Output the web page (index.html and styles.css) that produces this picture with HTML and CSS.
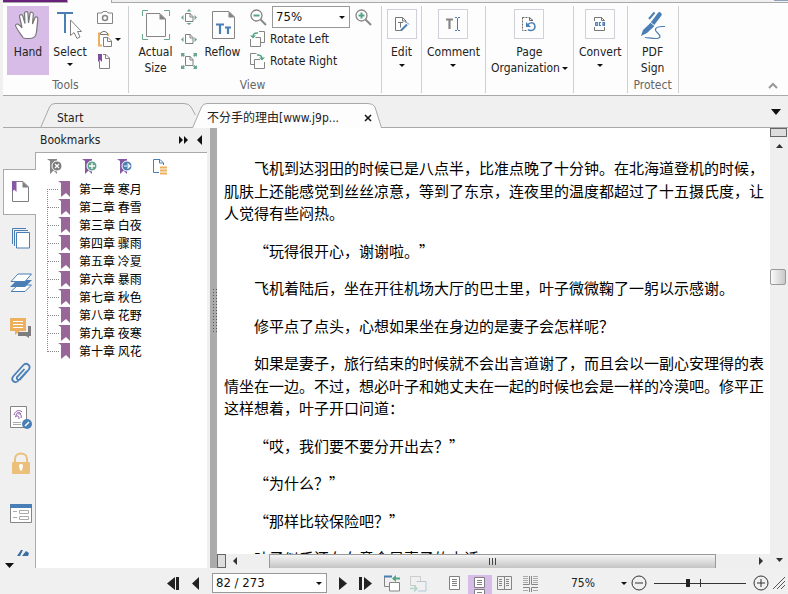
FILE: index.html
```html
<!DOCTYPE html>
<html lang="zh-CN">
<head>
    <meta charset="UTF-8">
    <meta name="viewport" content="width=device-width, initial-scale=1">
    <title>PDF Reader</title>
    <link rel="stylesheet" href="styles.css">
</head>
<body>
    <!-- Ribbon tab strip -->
    <div class="strip">
        <div class="strip-file"></div>
        <div class="strip-active"></div>
        <div class="strip-rest"></div>
        <div class="strip-search"></div>
    </div>

    <!-- Ribbon -->
    <header class="ribbon">
        <section class="group">
            <div class="group-body">
                <button class="big active">
                    <svg width="28" height="30" viewBox="0 0 28 30"><path d="M9 27.500C6 23 2 18 1.500 15.500C2 13 5 13.500 8 18L5.500 6.500C5.500 4 8.500 4 9 6.500L11 13.500L10.500 3.500C10.500 1 14 1 14 3.500L14.500 13L16 3.500C16.500 1.500 19.500 1.800 19.300 4.500L18.500 14L20.800 8C22 6 24.200 7 23.800 9.500L22.500 22C22 26 20 28.500 16 28.500H12C10.500 28.500 9.500 28.200 9 27.500Z" fill="#fff" stroke="#777" stroke-width="1.200"/></svg>
                    <span>Hand</span>
                </button>
                <button class="big">
                    <svg width="28" height="30" viewBox="0 0 28 30"><path d="M1 3H17M9 3V23" stroke="#4a7fb5" stroke-width="2" fill="none"/><path d="M14.500 10V25.500L18 22.500L21 28.500L24 27L21.500 21.500H25.500Z" fill="#fff" stroke="#808080"/></svg>
                    <span>Select</span>
                    <i class="arrow"></i>
                </button>
                <div class="minis">
                    <button class="mini" aria-label="Snapshot"><svg width="16" height="16" viewBox="0 0 16 16" fill="none" stroke="#858585"><path d="M.5 4V14.500H15.500V4H11L10 2.500H6L5 4Z"/><circle cx="8" cy="9" r="2.500" stroke-width="1.500"/></svg></button>
                    <button class="mini" aria-label="Clipboard"><svg width="16" height="16" viewBox="0 0 16 16" fill="none"><path d="M5 14.500H2V2.500H4M11 2.500V5" stroke="#edb05e" stroke-width="2"/><path d="M3.500 3.500V2L6 .5H8L10.500 2V3.500Z" stroke="#777"/><path d="M6.500 6.500H11L14.500 10V15.500H6.500Z" fill="#fff" stroke="#808080"/><path d="M10.500 6.500V10.500H14.500" stroke="#808080"/></svg><i class="arrow"></i></button>
                    <button class="mini" aria-label="Bookmark"><svg width="16" height="16" viewBox="0 0 16 16" fill="none"><path d="M2.500 8V15.500H12.500V5L9 1.500H6M8.500 1.500V5.500H12.500" stroke="#808080"/><path d="M1 1H5V9L3 7L1 9Z" fill="#7d4f9b"/></svg></button>
                </div>
            </div>
            <h2>Tools</h2>
        </section>

        <section class="group group-view">
            <div class="group-body">
                <button class="big">
                    <svg width="28" height="30" viewBox="0 0 28 30" fill="none"><path d="M.5 6V.5H6M22 .5H27.500V6M27.500 24V29.500H22M6 29.500H.5V24" stroke="#6aa58f"/><path d="M4.500 3.500H18L23.500 9V26.500H4.500Z" stroke="#858585" fill="#fdfdfd"/><path d="M17.500 3.500L24 9.500H17.500Z" fill="#858585"/></svg>
                    <span>Actual<br>Size</span>
                </button>
                <div class="minis">
                    <button class="mini" aria-label="Fit page"><svg width="16" height="16" viewBox="0 0 16 16"><path d="M4.500 4.500H9L12 7.500V12.500H4.500Z" fill="none" stroke="#808080"/><path d="M9 4V8H12" fill="none" stroke="#808080"/><path d="M8 0L10.500 2.500H5.500ZM8 16L10.500 14H5.500ZM0 8.500L2.500 6V11ZM16 8.500L13.500 6V11Z" fill="#6aa58f"/></svg></button>
                    <button class="mini" aria-label="Fit width"><svg width="16" height="16" viewBox="0 0 16 16"><path d="M4.500 3.500H9L12 6.500V12.500H4.500Z" fill="none" stroke="#808080"/><path d="M9 3V7H12" fill="none" stroke="#808080"/><path d="M0 8.500L2.500 6V11ZM16 8.500L13.500 6V11Z" fill="#6aa58f"/></svg></button>
                    <button class="mini" aria-label="Fit visible"><svg width="16" height="16" viewBox="0 0 16 16"><path d="M4.500 3.500H9L12 6.500V12.500H4.500Z" fill="none" stroke="#808080"/><path d="M9 3V7H12" fill="none" stroke="#808080"/><path d="M0 4V0H4L2.800 1.200L4 2.400L2.400 4L1.200 2.800ZM16 4V0H12L13.200 1.200L12 2.400L13.600 4L14.800 2.800ZM0 12V16H4L2.800 14.800L4 13.600L2.400 12L1.200 13.200ZM16 12V16H12L13.200 14.800L12 13.600L13.600 12L14.800 13.200Z" fill="#6aa58f"/></svg></button>
                </div>
                <button class="big">
                    <svg width="28" height="30" viewBox="0 0 28 30" fill="none"><path d="M3.500 1.500H20L25.500 7V28.500H3.500Z" stroke="#858585"/><path d="M19.500 1.500L26 7.500H19.500Z" fill="#858585"/><path d="M7 14.500H15M11 14V24M16 17.500H22M19 17V24" stroke="#4a7fb5" stroke-width="2.200"/></svg>
                    <span>Reflow</span>
                </button>
                <div class="zoom-tools">
                    <div class="zoom-row">
                        <button class="mini" aria-label="Zoom out"><svg width="17" height="17" viewBox="0 0 17 17" fill="none"><circle cx="6.500" cy="6.500" r="5.500" stroke="#858585" stroke-width="1.300"/><path d="M10.500 10.500L16 16" stroke="#8a8a8a" stroke-width="2"/><path d="M3.500 6.500H9.500" stroke="#56a486" stroke-width="2"/></svg></button>
                        <label class="combo zoom-combo">
                            <select aria-label="Zoom"><option>75%</option><option>100%</option></select>
                            <i class="arrow"></i>
                        </label>
                        <button class="mini" aria-label="Zoom in"><svg width="17" height="17" viewBox="0 0 17 17" fill="none"><circle cx="6.500" cy="6.500" r="5.500" stroke="#858585" stroke-width="1.300"/><path d="M10.500 10.500L16 16" stroke="#8a8a8a" stroke-width="2"/><path d="M3.500 6.500H9.500M6.500 3.500V9.500" stroke="#56a486" stroke-width="2"/></svg></button>
                    </div>
                    <button class="rotate"><svg width="16" height="16" viewBox="0 0 16 16" fill="none"><path d="M9 .5H14.500V11.500H11M.5 8V15.500H10.500V6.500H5.500" stroke="#858585"/><path d="M8 2C5 1.500 3 3 3 6" stroke="#56a486" stroke-width="1.500"/><path d="M0 4.500H6L3 7.500Z" fill="#56a486"/></svg>Rotate Left</button>
                    <button class="rotate"><svg width="16" height="16" viewBox="0 0 16 16" fill="none"><path d="M6.500 .5H.5V11.500H4M10 6.500H4.500V15.500H14.500V9" stroke="#858585"/><path d="M7 2C10 1.500 12 3 12 6" stroke="#56a486" stroke-width="1.500"/><path d="M9 4.500H15L12 7.500Z" fill="#56a486"/></svg>Rotate Right</button>
                </div>
            </div>
            <h2>View</h2>
        </section>

        <section class="group">
            <button class="framed">
                <span class="frame"><svg width="16" height="16" viewBox="0 0 16 16" fill="none"><path d="M9 12.500L7 14.500H1.500V1.500H8.500L12 5V7" stroke="#777"/><path d="M8.500 1.500V5H12M4 6.500H9M6.500 6.500V11.500" stroke="#777"/><path d="M7 14.500L13 8.500" stroke="#4a7fb5" stroke-width="2"/><path d="M13 6.500L15 8.500" stroke="#4a7fb5"/></svg></span>
                <span>Edit</span>
                <i class="arrow"></i>
            </button>
        </section>
        <section class="group">
            <button class="framed">
                <span class="frame"><svg width="16" height="16" viewBox="0 0 16 16" fill="none"><path d="M1 3.500H8M4.500 3.500V13" stroke="#858585" stroke-width="2.200"/><path d="M10 1.500H12M13 1.500H15M10 14.500H12M13 14.500H15M12.500 2V14" stroke="#4a7fb5"/></svg></span>
                <span>Comment</span>
                <i class="arrow"></i>
            </button>
        </section>
        <section class="group">
            <button class="framed">
                <span class="frame"><svg width="16" height="16" viewBox="0 0 16 16" fill="none"><path d="M1.500 1.500V14.500H6M1.500 1.500H8" stroke="#666" stroke-dasharray="2 1"/><path d="M8.500 1.500V4.500H12Z" stroke="#666"/><path d="M7 9C8 6.500 12 6 13.500 8.500C15 11.500 13 14.500 10 14.500C8.500 14.500 7.500 14 7 13.500" stroke="#4a7fb5" stroke-width="1.500"/><path d="M5 6V11H10Z" fill="#4a7fb5"/></svg></span>
                <span>Page<br>Organization<i class="arrow inline"></i></span>
            </button>
        </section>
        <section class="group">
            <button class="framed">
                <span class="frame"><svg width="16" height="16" viewBox="0 0 16 16" fill="none"><path d="M2.500 5V1.500H9.500L12.500 4.500V5M2.500 11V14.500H12.500V11M9.500 1.500V4.500H12.500" stroke="#777"/><path d="M3.700 6.500H5.300V9.500H3.700ZM9 6.500H7.500V9.500H9M11 10V6.500H12.500V8.300H11.500L12.800 10" stroke="#4a7fb5" stroke-width="1.200"/></svg></span>
                <span>Convert</span>
                <i class="arrow"></i>
            </button>
        </section>
        <section class="group group-protect">
            <div class="group-body">
                <button class="big">
                    <svg width="28" height="30" viewBox="0 0 28 30" fill="none"><path d="M20.500 4.500L12.500 15" stroke="#4a7fb5" stroke-width="4.500" stroke-linecap="round"/><path d="M11.500 13L15.500 16L8 23L2 26L4 20Z" fill="#4a7fb5"/><path d="M10 9L15.500 2.500" stroke="#4a7fb5" stroke-width="2"/><path d="M11 12L17 17" stroke="#fdfdfd"/><path d="M6 27.500C12 28 21 30 21 26.500C21 23.500 15.500 22 16.500 19C17.500 16 22 16.500 26 16.500" stroke="#4a7fb5" stroke-width="1.200"/></svg>
                    <span>PDF<br>Sign</span>
                </button>
            </div>
            <h2>Protect</h2>
        </section>
        <button class="collapse" aria-label="Collapse ribbon"><svg width="10" height="7" viewBox="0 0 10 7"><path d="M1 6L5 2L9 6" fill="none" stroke="#999" stroke-width="2"/></svg></button>
    </header>

    <!-- Document tabs -->
    <nav class="tabs">
        <a class="tab" href="#start">
            <svg class="tab-shape" viewBox="0 0 156 25" preserveAspectRatio="none"><path d="M.5 25L9.500 4Q11 .5 15 .5H144Q149 .5 151 4L155.500 12"/></svg>
            <span>Start</span>
        </a>
        <div class="tab tab-current">
            <svg class="tab-shape" viewBox="0 0 190 25" preserveAspectRatio="none"><path d="M.5 25L9.500 4Q11 .5 15 .5H176Q181 .5 183 4L189.500 25"/></svg>
            <a href="#doc">不分手的理由[www.j9p...</a>
            <button aria-label="Close tab"><svg width="8" height="8" viewBox="0 0 8 8"><path d="M1 1L7 7M7 1L1 7" stroke="#111" stroke-width="1.500"/></svg></button>
        </div>
        <button class="tab-list" aria-label="Tab list"><svg width="10" height="6" viewBox="0 0 10 6"><path d="M0 0H10L5 6Z" fill="#111"/></svg></button>
    </nav>

    <main class="work">
        <aside class="rail">
            <button class="current" aria-label="Bookmarks"><svg width="18" height="22" viewBox="0 0 18 22" fill="none"><path d="M5 .5H12L17.500 6V20.500H1.500V10" stroke="#808080"/><path d="M11.500 .5L18 6.500H11.500Z" fill="#808080"/><path d="M1 0H5.500V11L3.200 8.500L1 11Z" fill="#8657a5"/></svg></button>
            <button aria-label="Pages"><svg width="20" height="22" viewBox="0 0 20 22" fill="none" stroke="#4a7fb5"><path d="M1.500 17V1.500H15M3.500 19V3.500H17"/><path d="M5.500 5.500H18.500V21H5.500Z" fill="#fff"/></svg></button>
            <button aria-label="Layers"><svg width="22" height="20" viewBox="0 0 22 20"><path d="M1 18.500L8 12H21.500L15 18.500Z" fill="#fff" stroke="#4a7fb5"/><path d="M0 14L7 7H22L15 14Z" fill="#4a7fb5"/><path d="M1 8.500L8 1H21.500L15 8.500Z" fill="#fff" stroke="#4a7fb5"/></svg></button>
            <button aria-label="Comments"><svg width="22" height="22" viewBox="0 0 22 22"><path d="M18 9H21V19H19V21L16 19H8V15H18Z" fill="#7d7d7d"/><path d="M0 1H16V14H10L5 18V14H0Z" fill="#edb05e"/><path d="M3 4.500H13M3 7.500H13M3 10.500H13" stroke="#fff"/></svg></button>
            <button aria-label="Attachments"><svg width="20" height="22" viewBox="0 0 20 22" fill="none" stroke="#4a7fb5" stroke-width="1.800"><path d="M16 9L7.500 18.500C4 22.500-1 18 2.500 14L12 3.500C15.500-.5 21 4 17.500 8L9.500 17C7 19.500 4.500 16.500 6.500 14.500L13.500 7"/></svg></button>
            <button aria-label="Signatures"><svg width="22" height="24" viewBox="0 0 22 24" fill="none"><path d="M.5 .5H16.500V21.500H.5Z" fill="#fff" stroke="#858585"/><path d="M4 9C5 5 9 3 12 6M6 10C6 7 9 5 11 8M8 8C10 7 12 9 11 12M5 11C8 9 9 10 9 13" stroke="#8657a5"/><path d="M3 16.500H11M3 18.500H11" stroke="#aaa"/><circle cx="17" cy="18" r="5" fill="#4a7fb5"/><path d="M15 20L19 16" stroke="#fff" stroke-width="1.500"/></svg></button>
            <button aria-label="Security"><svg width="18" height="22" viewBox="0 0 18 22"><path d="M3 11V7C3-.5 15-.5 15 7V11" fill="none" stroke="#eac07b" stroke-width="2"/><rect y="10" width="18" height="12" rx="1" fill="#eac07b"/><path d="M7 14A2 2 0 1 1 11 14L10 18.500H8Z" fill="#fff"/></svg></button>
            <button class="fields" aria-label="Fields"><svg width="22" height="19" viewBox="0 0 22 19" fill="none"><path d="M.5 .5H21.500V18.500H.5Z" fill="#fff" stroke="#858585"/><path d="M0 0H22V4H0Z" fill="#4a7fb5"/><path d="M3 7.500H7M3 13.500H7M9.500 6.500H18.500V9.500H9.500ZM9.500 12.500H18.500V15.500H9.500Z" stroke="#aaa"/></svg></button>
            <div class="rail-more">
                <svg class="rail-cut" width="12" height="6" viewBox="0 0 12 6"><path d="M0 6L4 0H6L3 6ZM5 6L9 1L12 3L11 6Z" fill="#3a6ea5"/></svg>
                <button aria-label="More panels"><svg width="9" height="5" viewBox="0 0 9 5"><path d="M0 0H9L4.500 5Z" fill="#111"/></svg></button>
            </div>
        </aside>

        <section class="panel">
            <div class="panel-head">
                <h2>Bookmarks</h2>
                <button aria-label="Expand"><svg width="9" height="8" viewBox="0 0 9 8"><path d="M0 0L4 4L0 8ZM5 0L9 4L5 8Z" fill="#111"/></svg></button>
                <button aria-label="Hide panel"><svg width="5" height="10" viewBox="0 0 5 10"><path d="M5 0V10L0 5Z" fill="#111"/></svg></button>
            </div>
            <div class="panel-body">
                <div class="panel-tools">
                    <button aria-label="Delete bookmark"><svg width="16" height="17" viewBox="0 0 16 17"><path d="M0 1H10V16L6.500 12.500L3 16V3Z" fill="#858585"/><circle cx="10" cy="8" r="5" fill="#7a7a7a" stroke="#fff"/><path d="M8 6L12 10M12 6L8 10" stroke="#fff" stroke-width="1.300"/></svg></button>
                    <button aria-label="Add bookmark"><svg width="16" height="17" viewBox="0 0 16 17"><path d="M0 1H10V16L6.500 12.500L3 16V3Z" fill="#8657a5"/><circle cx="10" cy="8" r="5" fill="#63a58c" stroke="#fff"/><path d="M7 8H13M10 5V11" stroke="#fff" stroke-width="1.300"/></svg></button>
                    <button aria-label="Go to bookmark"><svg width="16" height="17" viewBox="0 0 16 17"><path d="M0 1H10V16L6.500 12.500L3 16V3Z" fill="#8657a5"/><circle cx="10" cy="8" r="5" fill="#4a7fb5" stroke="#fff"/><path d="M7 8H13M10.500 5.500L13 8L10.500 10.500" stroke="#fff" fill="none" stroke-width="1.200"/></svg></button>
                    <button aria-label="Options"><svg width="16" height="17" viewBox="0 0 16 17" fill="none"><path d="M7 14.500H1.500V1.500H8L11.500 5V7M7.500 1.500V5H11" stroke="#4a7fb5"/><path d="M8 9.500H15M8 12.500H15M8 15.500H15" stroke="#edb05e" stroke-width="2"/></svg></button>
                </div>
                <ul class="tree">
                    <li><svg class="mark" viewBox="0 0 12 16"><path d="M0 0H12V16L8 12L3 16V2Z"/></svg><a href="#c1">第一章 寒月</a></li>
                    <li><svg class="mark" viewBox="0 0 12 16"><path d="M0 0H12V16L8 12L3 16V2Z"/></svg><a href="#c2">第二章 春雪</a></li>
                    <li><svg class="mark" viewBox="0 0 12 16"><path d="M0 0H12V16L8 12L3 16V2Z"/></svg><a href="#c3">第三章 白夜</a></li>
                    <li><svg class="mark" viewBox="0 0 12 16"><path d="M0 0H12V16L8 12L3 16V2Z"/></svg><a href="#c4">第四章 骤雨</a></li>
                    <li><svg class="mark" viewBox="0 0 12 16"><path d="M0 0H12V16L8 12L3 16V2Z"/></svg><a href="#c5">第五章 冷夏</a></li>
                    <li><svg class="mark" viewBox="0 0 12 16"><path d="M0 0H12V16L8 12L3 16V2Z"/></svg><a href="#c6">第六章 暴雨</a></li>
                    <li><svg class="mark" viewBox="0 0 12 16"><path d="M0 0H12V16L8 12L3 16V2Z"/></svg><a href="#c7">第七章 秋色</a></li>
                    <li><svg class="mark" viewBox="0 0 12 16"><path d="M0 0H12V16L8 12L3 16V2Z"/></svg><a href="#c8">第八章 花野</a></li>
                    <li><svg class="mark" viewBox="0 0 12 16"><path d="M0 0H12V16L8 12L3 16V2Z"/></svg><a href="#c9">第九章 夜寒</a></li>
                    <li><svg class="mark" viewBox="0 0 12 16"><path d="M0 0H12V16L8 12L3 16V2Z"/></svg><a href="#c10">第十章 风花</a></li>
                </ul>
            </div>
        </section>

        <div class="splitter"><div class="grip"></div></div>

        <section class="viewer">
            <div class="doc-col">
                <article class="doc" id="doc">
                    <p>飞机到达羽田的时候已是八点半，比准点晚了十分钟。在北海道登机的时候，肌肤上还能感觉到丝丝凉意，等到了东京，连夜里的温度都超过了十五摄氏度，让人觉得有些闷热。</p>
                    <p>“玩得很开心，谢谢啦。”</p>
                    <p>飞机着陆后，坐在开往机场大厅的巴士里，叶子微微鞠了一躬以示感谢。</p>
                    <p>修平点了点头，心想如果坐在身边的是妻子会怎样呢？</p>
                    <p>如果是妻子，旅行结束的时候就不会出言道谢了，而且会以一副心安理得的表情坐在一边。不过，想必叶子和她丈夫在一起的时候也会是一样的冷漠吧。修平正这样想着，叶子开口问道：</p>
                    <p>“哎，我们要不要分开出去？”</p>
                    <p>“为什么？”</p>
                    <p>“那样比较保险吧？”</p>
                    <p>叶子似乎还在在意今早妻子的电话。</p>
                </article>
                <div class="hscroll">
                    <div class="split-box"></div>
                    <button aria-label="Scroll left"><svg width="4" height="8" viewBox="0 0 4 8"><path d="M4 0V8L0 4Z" fill="#333"/></svg></button>
                    <div class="htrack"><div class="hthumb"><i></i><i></i><i></i></div></div>
                    <button aria-label="Scroll right"><svg width="4" height="8" viewBox="0 0 4 8"><path d="M0 0V8L4 4Z" fill="#333"/></svg></button>
                </div>
            </div>
            <div class="vscroll">
                <div class="split-box"></div>
                <button aria-label="Scroll up"><svg width="7" height="4" viewBox="0 0 7 4"><path d="M0 4H7L3.500 0Z" fill="#333"/></svg></button>
                <div class="vtrack"><div class="vthumb"></div></div>
                <button aria-label="Scroll down"><svg width="7" height="4" viewBox="0 0 7 4"><path d="M0 0H7L3.500 4Z" fill="#333"/></svg></button>
            </div>
        </section>
    </main>

    <footer class="status">
        <button aria-label="First page"><svg width="13" height="13" viewBox="0 0 13 13"><path d="M8 0V13L0 6.500ZM9 0H12V13H9Z" fill="#222"/></svg></button>
        <button aria-label="Previous page"><svg width="8" height="13" viewBox="0 0 8 13"><path d="M7 0V13L0 6.500Z" fill="#222"/></svg></button>
        <label class="combo page-combo">
            <select aria-label="Page"><option>82 / 273</option></select>
            <i class="arrow"></i>
        </label>
        <button aria-label="Next page"><svg width="8" height="13" viewBox="0 0 8 13"><path d="M0 0V13L8 6.500Z" fill="#222"/></svg></button>
        <button aria-label="Last page"><svg width="13" height="13" viewBox="0 0 13 13"><path d="M5 0V13L13 6.500ZM0 0H3V13H0Z" fill="#222"/></svg></button>
        <div class="status-set">
            <button aria-label="Previous view"><svg width="17" height="17" viewBox="0 0 17 17" fill="none"><path d="M6 11.500H.5V1.500H8" stroke="#858585"/><path d="M0 1.500H8" stroke="#4a7fb5" stroke-width="2"/><path d="M5.500 7.500H15.500V16H5.500Z" fill="#fff" stroke="#858585"/><path d="M9 3.500H16" stroke="#56a486" stroke-width="2"/><path d="M8 3.500L12 0V7Z" fill="#56a486"/></svg></button>
            <button aria-label="Next view"><svg width="17" height="17" viewBox="0 0 17 17" fill="none"><path d="M6 10.500H.5V1.500H10.500V6" stroke="#ccc"/><path d="M6.500 6.500H16V16H8" stroke="#b4c8d8"/><path d="M0 13.500H7M4 10.500L7 13.500L4 16.500" stroke="#b4d4c8" stroke-width="1.500"/></svg></button>
        </div>
        <div class="modes">
            <button aria-label="Single page"><svg width="12" height="14" viewBox="0 0 12 14" fill="none" stroke="#808080"><path d="M.5 .5H10.500V13.500H.5Z" fill="#fff"/><path d="M3 3.500H8M3 5.500H8M3 7.500H8M3 9.500H8"/></svg></button>
            <button class="on" aria-label="Continuous"><svg width="12" height="18" viewBox="0 0 12 18" fill="none" stroke="#808080"><path d="M.5 1.500H10.500V11.500H.5ZM.5 18V13.500H10.500V18" fill="#fff"/><path d="M3 4.500H8M3 6.500H8M3 8.500H8M3 16.500H8"/></svg></button>
            <button aria-label="Facing"><svg width="16" height="14" viewBox="0 0 16 14" fill="none" stroke="#858585"><path d="M.5 .5H7.500V13.500H.5ZM7.500 .5H14.500V13.500H7.500Z"/><path d="M2 3.500H5M2 5.500H5M2 7.500H5M2 9.500H5M9 3.500H12M9 5.500H12M9 7.500H12M9 9.500H12"/></svg></button>
            <button aria-label="Continuous facing"><svg width="16" height="18" viewBox="0 0 16 18" fill="none" stroke="#858585"><path d="M6.500 2V10.500H0M8.500 2V10.500H15M0 13.500H6.500V18M15 13.500H8.500V18"/><path d="M0 2.500H5M0 4.500H5M0 6.500H5M0 8.500H5M10 2.500H15M10 4.500H15M10 6.500H15M10 8.500H15M0 16.500H5M10 16.500H15" stroke="#aaa"/></svg></button>
        </div>
        <button class="percent">75%<i class="arrow"></i></button>
        <div class="zoom-bar">
            <button aria-label="Zoom out"><svg width="16" height="16" viewBox="0 0 16 16" fill="none" stroke="#333"><circle cx="8" cy="8" r="7"/><path d="M4 8H12"/></svg></button>
            <input type="range" min="0" max="100" value="36" aria-label="Zoom level">
            <button aria-label="Zoom in"><svg width="16" height="16" viewBox="0 0 16 16" fill="none" stroke="#333"><circle cx="8" cy="8" r="7"/><path d="M4 8H12M8 4V12"/></svg></button>
            <svg width="13" height="12" viewBox="0 0 13 12"><path d="M0 12L12 0M4 12L12 4M8 12L12 8" stroke="#555"/></svg>
        </div>
    </footer>
</body>
</html>
```

FILE: styles.css
```css
* {
    box-sizing: border-box;
}

body {
    margin: 0;
    height: 100vh;
    display: flex;
    flex-direction: column;
    overflow: hidden;
    background: #f0f0f0;
    color: #222;
    font-family: "DejaVu Sans Condensed", "Noto Sans CJK SC", sans-serif;
    font-size: 12px;
    line-height: 16px;
}

button {
    display: flex;
    align-items: center;
    justify-content: center;
    padding: 0;
    border: 0;
    background: none;
    color: inherit;
    font: inherit;
}

h2 {
    margin: 0;
    font-size: 12px;
    font-weight: normal;
}

a {
    color: inherit;
    text-decoration: none;
}

svg {
    display: block;
    flex: none;
}

/* small drop-down triangle */
.arrow {
    flex: none;
    border: 3px solid transparent;
    border-top-color: #111;
    border-bottom: 0;
}

.arrow.inline {
    display: inline-block;
    margin-left: 2px;
    vertical-align: middle;
}

/* Ribbon */
.strip {
    display: flex;
    flex: none;
    height: 3px;
    padding-left: 3px;
}

.strip-file {
    width: 64px;
    border-top: 2px solid #68217a;
    border-bottom: 1px solid #a9a9a9;
}

.strip-active {
    width: 45px;
    background: #fdfdfd;
    border: solid #a9a9a9;
    border-width: 0 1px;
}

.strip-rest {
    flex: 1;
    border-bottom: 1px solid #a9a9a9;
}

.strip-search {
    width: 14px;
    border-top: 1px solid #8fa3bb;
    border-bottom: 1px solid #a9a9a9;
}

.ribbon {
    display: flex;
    flex: none;
    margin-left: 3px;
    padding: 3px 10px 2px 0;
    background: #fdfdfd;
    border-bottom: 1px solid #a9a9a9;
}

.group {
    display: flex;
    flex-direction: column;
    justify-content: space-between;
    min-height: 87px;
    padding: 0 4px;
    border-right: 1px solid #d0d0d4;
}

.group h2 {
    color: #666;
    text-align: center;
}

.group-body {
    display: flex;
}

.group-view {
    padding-right: 9px;
}

.big {
    flex-direction: column;
    justify-content: flex-start;
    width: 42px;
    height: 69px;
    padding-top: 4px;
}

.big span {
    margin-top: 4px;
}

.big .arrow {
    margin-top: 3px;
}

.big.active {
    background: #d8bce8;
}

.group-view .big {
    width: 45px;
}

.minis {
    display: flex;
    flex-direction: column;
    padding: 0 3px 0 6px;
}

.group-view .minis {
    padding: 0 3px;
}

.mini {
    height: 22px;
    gap: 2px;
    justify-content: flex-start;
}

.zoom-tools {
    padding-left: 5px;
}

.zoom-row {
    display: flex;
    align-items: center;
    gap: 5px;
}

.rotate {
    height: 22px;
    gap: 4px;
}

/* native select with our own triangle laid over it */
.combo {
    display: grid;
    align-items: center;
    background: #fff;
    border: 1px solid #999;
}

.combo > * {
    grid-area: 1 / 1;
}

.combo select {
    appearance: none;
    width: 100%;
    padding: 0 3px;
    border: 0;
    background: none;
    color: #111;
    font: inherit;
    font-size: 13px;
}

.combo .arrow {
    justify-self: end;
    margin-right: 4px;
    pointer-events: none;
}

.zoom-combo {
    width: 78px;
    height: 22px;
}

.framed {
    flex-direction: column;
    justify-content: flex-start;
    min-width: 31px;
    padding-top: 3px;
}

.framed > span {
    padding: 0 1px;
}

.framed .frame {
    display: grid;
    place-items: center;
    width: 30px;
    height: 30px;
    margin-bottom: 5px;
    border: 1px solid #d0d0d8;
}

.framed > .arrow {
    margin-top: 4px;
}

.collapse {
    align-self: flex-end;
    margin: 0 0 4px auto;
}

/* Document tabs */
.tabs {
    display: flex;
    flex: none;
    align-items: flex-end;
    height: 32px;
    margin-left: 3px;
    padding: 0 7px 0 37px;
    border-bottom: 1px solid #a9a9a9;
}

.tab {
    position: relative;
    display: flex;
    align-items: center;
    width: 156px;
    height: 24px;
    padding-left: 17px;
}

.tab-shape {
    position: absolute;
    inset: 0;
    width: 100%;
    height: 25px;
    fill: none;
    stroke: #a9a9a9;
}

.tab span,
.tab a,
.tab button {
    position: relative;
    padding-top: 5px;
}

.tab-current {
    justify-content: space-between;
    width: 190px;
    margin-left: -4px;
    padding: 0 10px 0 15px;
}

.tab-current .tab-shape {
    fill: #fdfdfd;
}

.tab-list {
    align-self: center;
    margin-left: auto;
}

/* Work area */
.work {
    display: flex;
    flex: 1;
    min-height: 0;
}

.rail {
    display: flex;
    flex-direction: column;
    flex: none;
    width: 35px;
    padding: 41px 0 0 3px;
}

.rail > button {
    flex: none;
    height: 45px;
    padding-left: 3px;
}

.rail .current {
    z-index: 1;
    height: 46px;
    margin-right: -1px;
    padding: 0;
    background: #fff;
    border: 1px solid #a9a9a9;
    border-right: 0;
}

.rail .fields {
    margin-top: 6px;
}

.rail-more {
    display: flex;
    flex-direction: column;
    gap: 7px;
    padding: 14px 0 0 2px;
}

.rail-more button {
    align-self: flex-start;
}

.rail-cut {
    align-self: center;
    margin-left: 6px;
}

.panel {
    display: flex;
    flex-direction: column;
    flex: none;
    width: 172px;
}

.panel-head {
    display: flex;
    align-items: center;
    height: 24px;
    padding: 0 5px;
    gap: 9px;
}

.panel-head h2 {
    flex: 1;
}

.panel-body {
    flex: 1;
    background: #fff;
    border: solid #a9a9a9;
    border-width: 1px 0 0 1px;
}

.panel-tools {
    display: flex;
    gap: 19px;
    padding: 5px 11px;
}

.tree {
    margin: 0;
    padding: 0 0 0 11px;
    list-style: none;
    color: #000;
    font-family: "Noto Sans CJK SC", sans-serif;
}

.tree li {
    position: relative;
    display: flex;
    align-items: center;
    height: 18px;
    padding-left: 11px;
}

.tree li::before {
    content: "";
    position: absolute;
    left: 0;
    top: -9px;
    width: 11px;
    height: 18px;
    border: dotted #888;
    border-width: 0 0 1px 1px;
}

.tree li:first-child::before {
    top: 8px;
    height: 1px;
    border-left: 0;
}

.mark {
    width: 12px;
    height: 16px;
    margin-right: 9px;
    fill: #996699;
}

.splitter {
    display: flex;
    flex: none;
    align-items: center;
    justify-content: flex-end;
    width: 10px;
    background: #ababab;
    border-left: 3px solid #f0f0f0;
}

.grip {
    width: 5px;
    height: 44px;
    margin-bottom: 76px;
    background: radial-gradient(#555 1px, transparent 1px) 0 0 / 3px 3px;
}

/* Viewer */
.viewer {
    display: flex;
    flex: 1;
    min-width: 0;
}

.doc-col {
    display: flex;
    flex-direction: column;
    flex: 1;
    min-width: 0;
    background: #fff;
}

.doc {
    flex: 1;
    min-height: 0;
    padding: 29px 5px 0 7px;
    overflow: hidden;
    color: #000;
    font-family: "Noto Sans CJK SC", sans-serif;
    font-size: 15px;
    line-height: 1.5;
    text-spacing-trim: space-all;
}

.doc p {
    margin: 0 0 15px;
    text-indent: 2em;
}

.hscroll {
    display: flex;
    flex: none;
    height: 14px;
    background: #efefef;
}

.hscroll button {
    width: 18px;
}

.split-box {
    flex: none;
    width: 9px;
    background: #ddd;
    border: 1px solid #666;
}

.htrack {
    flex: 1;
    padding: 0 36px 0 25px;
}

.hthumb {
    display: flex;
    align-items: center;
    justify-content: center;
    gap: 2px;
    height: 14px;
    background: linear-gradient(#f5f5f5, #c4c4c4);
    border: 1px solid #999;
    border-bottom: 0;
}

.hthumb i {
    width: 1px;
    height: 7px;
    background: #444;
}

.vscroll {
    display: flex;
    flex-direction: column;
    flex: none;
    width: 18px;
    background: #efefef;
}

.vscroll .split-box {
    width: 17px;
    height: 9px;
}

.vscroll button {
    height: 17px;
}

.vtrack {
    flex: 1;
    padding-top: 115px;
}

.vthumb {
    width: 16px;
    height: 16px;
    background: linear-gradient(90deg, #fafafa, #c8c8c8);
    border: 1px solid #999;
    border-radius: 2px;
}

/* Status bar */
.status {
    display: flex;
    flex: none;
    align-items: center;
    gap: 12px;
    height: 26px;
    padding: 4px 2px 0 167px;
    overflow: hidden;
}

.status > button {
    flex: none;
}

.page-combo {
    width: 115px;
    height: 20px;
}

.status-set {
    display: flex;
    gap: 9px;
}

.modes {
    display: flex;
    align-self: stretch;
    margin-left: 3px;
}

.modes button {
    width: 26px;
}

.modes .on {
    width: 24px;
    margin-top: 3px;
    background: #d8bce8;
}

.percent {
    gap: 26px;
    margin: 0 -8px 0 auto;
}

.zoom-bar {
    display: flex;
    align-items: center;
    gap: 4px;
}

.zoom-bar input {
    appearance: none;
    width: 92px;
    height: 9px;
    margin: 0 3px;
    background:
        linear-gradient(#333, #333) 50% 50% / 1px 8px no-repeat,
        linear-gradient(#333, #333) 0 50% / 100% 1px no-repeat;
}

.zoom-bar input::-webkit-slider-thumb {
    appearance: none;
    width: 4px;
    height: 8px;
    background: #222;
}
```
